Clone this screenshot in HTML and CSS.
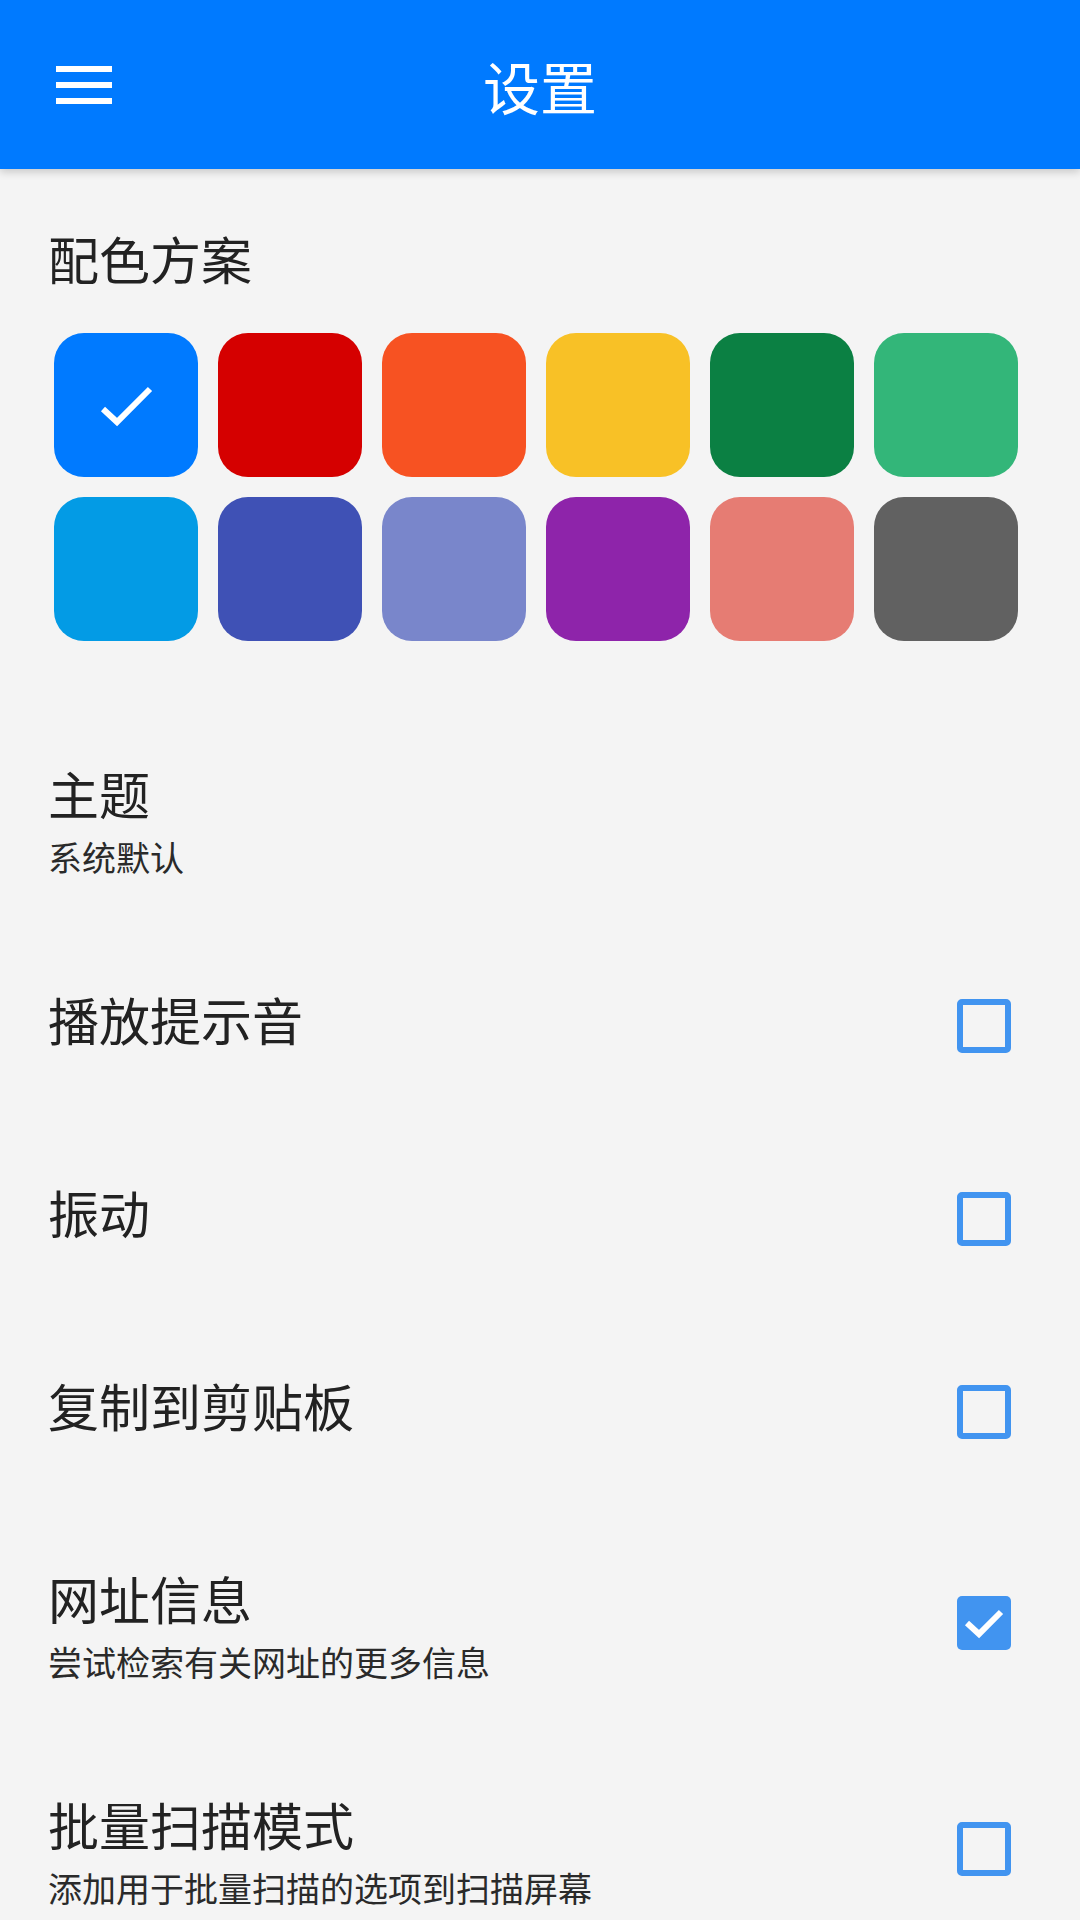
FILE: index.html
```html
<!DOCTYPE html>
<html lang="zh-CN">
<head>
    <meta charset="UTF-8">
    <title>设置</title>
    <link rel="stylesheet" href="styles.css">
</head>
<body>

<header class="toolbar">
    <div class="menu-btn">
        <svg width="56" height="38" viewBox="0 0 56 38">
            <rect x="0" y="0" width="56" height="6" fill="#fff"/>
            <rect x="0" y="16" width="56" height="6" fill="#fff"/>
            <rect x="0" y="32" width="56" height="6" fill="#fff"/>
        </svg>
    </div>
    <h1 class="toolbar-title">设置</h1>
    <div></div>
</header>

<main class="settings">
    <section class="palette">
        <h2>配色方案</h2>
        <div class="swatches">
            <div class="swatch" style="background:#007aff">
                <svg width="144" height="144" viewBox="0 0 144 144">
                    <polyline points="49,76 63,89 96,56" fill="none" stroke="#fff" stroke-width="6"/>
                </svg>
            </div>
            <div class="swatch" style="background:#d50000"></div>
            <div class="swatch" style="background:#f75222"></div>
            <div class="swatch" style="background:#f8c126"></div>
            <div class="swatch" style="background:#0b8043"></div>
            <div class="swatch" style="background:#33b679"></div>
            <div class="swatch" style="background:#039be5"></div>
            <div class="swatch" style="background:#3f51b5"></div>
            <div class="swatch" style="background:#7986cb"></div>
            <div class="swatch" style="background:#8e24aa"></div>
            <div class="swatch" style="background:#e67c73"></div>
            <div class="swatch" style="background:#616161"></div>
        </div>
    </section>

    <div class="pref two">
        <div class="pref-text">
            <div class="pref-title">主题</div>
            <div class="pref-summary">系统默认</div>
        </div>
    </div>

    <div class="pref">
        <div class="pref-text">
            <div class="pref-title">播放提示音</div>
        </div>
        <span class="checkbox"></span>
    </div>

    <div class="pref">
        <div class="pref-text">
            <div class="pref-title">振动</div>
        </div>
        <span class="checkbox"></span>
    </div>

    <div class="pref">
        <div class="pref-text">
            <div class="pref-title">复制到剪贴板</div>
        </div>
        <span class="checkbox"></span>
    </div>

    <div class="pref two">
        <div class="pref-text">
            <div class="pref-title">网址信息</div>
            <div class="pref-summary">尝试检索有关网址的更多信息</div>
        </div>
        <span class="checkbox checked">
            <svg width="54" height="54" viewBox="0 0 54 54">
                <polyline points="10,27 22,38 44,16" fill="none" stroke="#fff" stroke-width="6"/>
            </svg>
        </span>
    </div>

    <div class="pref two">
        <div class="pref-text">
            <div class="pref-title">批量扫描模式</div>
            <div class="pref-summary">添加用于批量扫描的选项到扫描屏幕</div>
        </div>
        <span class="checkbox"></span>
    </div>
</main>

</body>
</html>
```

FILE: styles.css
```css
/* Settings screen */
body {
    margin: 0;
    height: 1920px;
    overflow: hidden;
    background-color: #f4f4f4;
    font-family: 'Noto Sans CJK SC', 'Noto Sans', sans-serif;
    color: #222;
}

.toolbar {
    display: grid;
    grid-template-columns: 1fr auto 1fr;
    align-items: center;
    height: 169px;
    padding-left: 56px;
    background-color: #007aff;
    box-shadow: 0 3px 8px rgba(0, 0, 0, 0.18);
    position: relative;
}

.menu-btn svg {
    display: block;
}

.toolbar-title {
    margin: 0 0 0 -56px; /* keep title centred on the full width */
    font-size: 57px;
    font-weight: normal;
    line-height: 72px;
    color: #fff;
}

.settings {
    padding: 0 69px 0 48px;
}

/* Colour palette */
.palette {
    padding: 53px 0 67px;
}

.palette h2 {
    margin: 0;
    font-size: 51px;
    font-weight: normal;
    line-height: 72px;
}

.swatches {
    display: grid;
    grid-template-columns: repeat(6, 144px);
    gap: 20px;
    margin: 39px 0 0 6px;
}

.swatch {
    width: 144px;
    height: 144px;
    border-radius: 30px;
}

.swatch svg {
    display: block;
}

/* Preference rows */
.pref {
    display: flex;
    align-items: flex-start;
    justify-content: space-between;
    min-height: 193px;
    padding: 49px 0;
    box-sizing: border-box;
}

.pref-title {
    font-size: 51px;
    line-height: 72px;
}

.pref-summary {
    font-size: 34px;
    line-height: 56px;
    color: #2a2a2a;
}

.checkbox {
    width: 54px;
    height: 54px;
    margin-top: 16px;
    box-sizing: border-box;
    border: 6px solid #4194f0;
    border-radius: 5px;
}

.pref.two .checkbox {
    margin-top: 34px;
}

.checkbox.checked {
    border: none;
    background-color: #4194f0;
}

.checkbox svg {
    display: block;
}
```
